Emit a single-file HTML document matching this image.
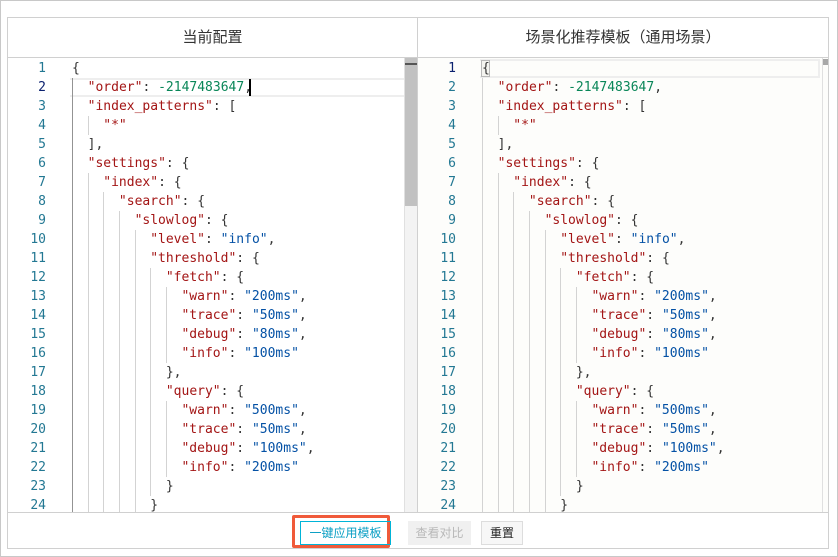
<!DOCTYPE html>
<html><head><meta charset="utf-8"><style>
*{margin:0;padding:0;box-sizing:border-box}
body{width:838px;height:557px;background:#fff;position:relative;overflow:hidden;font-family:"Liberation Sans","Noto Sans CJK SC",sans-serif}
.outer{position:absolute;left:0;top:0;width:838px;height:557px;border:1px solid #c8c8c8}
.box{position:absolute;left:7px;top:17px;width:822px;height:532px;border:1px solid #d0d0d0}
.hd{position:absolute;top:0;height:40px;line-height:40px;text-align:center;font-size:15px;color:#333;border-bottom:1px solid #d0d0d0}
.code{position:absolute;top:40px;height:454px;overflow:hidden;font-family:"DejaVu Sans Mono",monospace;font-size:13px}
.ln{position:absolute;top:1px;width:38px;text-align:right;color:#237893;line-height:19px}
.tx{position:absolute;top:1px;line-height:19px;white-space:pre;color:#333}
.tx div{height:19px}
i{display:inline-block;width:2ch;height:19px;vertical-align:top;border-left:1px solid #d3d3d3}
i.a{border-left-color:#939393}
.k{color:#a31515}.n{color:#098658}.s{color:#0451a5}
.ft{position:absolute;left:0;top:494px;width:820px;height:36px;border-top:1px solid #d0d0d0}
.btn{position:absolute;top:8px;height:24px;line-height:22px;font-size:12px;text-align:center;border:1px solid #ddd}
</style></head><body>
<div class="outer"></div>
<div class="box">
 <div class="hd" style="left:0;width:410px;border-right:1px solid #d0d0d0">当前配置</div>
 <div class="hd" style="left:410px;width:410px">场景化推荐模板（通用场景）</div>

 <div class="code" style="left:0;width:410px;border-right:1px solid #d0d0d0;background:#fff">
  <div style="position:absolute;left:62px;top:20px;width:348px;height:19px;border:2px solid #eee;border-left:none"></div>
  <div class="ln" id="l1"></div>
  <div class="tx" id="t1" style="left:64px"></div>
  <div style="position:absolute;left:241px;top:21px;width:2px;height:17px;background:#000"></div>
  <div style="position:absolute;left:396px;top:0;width:14px;height:454px;background:#f3f3f3;border-left:1px solid #e0e0e0"></div>
  <div style="position:absolute;left:397px;top:0;width:13px;height:148px;background:#c1c1c1"></div>
  <div style="position:absolute;left:397px;top:5px;width:13px;height:2px;background:#555"></div>
 </div>

 <div class="code" style="left:410px;width:410px;background:#fdfdfb">
  <div style="position:absolute;left:62px;top:1px;width:340px;height:19px;border:2px solid #eee;border-left:none"></div>
  <div style="position:absolute;left:63px;top:2px;width:9px;height:17px;border:1px solid #b9b9b9;background:#f4f4f0"></div>
  <div class="ln" id="l2"></div>
  <div class="tx" id="t2" style="left:64px"></div>
  <div style="position:absolute;left:404px;top:0;width:1px;height:454px;background:#e0e0e0"></div>
  <div style="position:absolute;left:405px;top:1px;width:6px;height:6px;background:#a8a8a8"></div>
 </div>

 <div class="ft">
  <div style="position:absolute;left:284px;top:2px;width:98px;height:33px;border:3px solid #f05a3a;border-radius:2px"></div>
  <div class="btn" style="left:292px;width:91px;border-color:#00b4d8;color:#0a9fc4">一键应用模板</div>
  <div class="btn" style="left:400px;width:63px;background:#f0f0f0;border-color:#f0f0f0;color:#b8b8b8">查看对比</div>
  <div class="btn" style="left:473px;width:42px;background:#f7f7f7;color:#222">重置</div>
 </div>
</div>
<script>
var L=[
[0,'{'],
[2,'<span class="k">"order"</span>: <span class="n">-2147483647</span>,'],
[2,'<span class="k">"index_patterns"</span>: ['],
[4,'<span class="k">"*"</span>'],
[2,'],'],
[2,'<span class="k">"settings"</span>: {'],
[4,'<span class="k">"index"</span>: {'],
[6,'<span class="k">"search"</span>: {'],
[8,'<span class="k">"slowlog"</span>: {'],
[10,'<span class="k">"level"</span>: <span class="s">"info"</span>,'],
[10,'<span class="k">"threshold"</span>: {'],
[12,'<span class="k">"fetch"</span>: {'],
[14,'<span class="k">"warn"</span>: <span class="s">"200ms"</span>,'],
[14,'<span class="k">"trace"</span>: <span class="s">"50ms"</span>,'],
[14,'<span class="k">"debug"</span>: <span class="s">"80ms"</span>,'],
[14,'<span class="k">"info"</span>: <span class="s">"100ms"</span>'],
[12,'},'],
[12,'<span class="k">"query"</span>: {'],
[14,'<span class="k">"warn"</span>: <span class="s">"500ms"</span>,'],
[14,'<span class="k">"trace"</span>: <span class="s">"50ms"</span>,'],
[14,'<span class="k">"debug"</span>: <span class="s">"100ms"</span>,'],
[14,'<span class="k">"info"</span>: <span class="s">"200ms"</span>'],
[12,'}'],
[10,'}']];
function build(ln,tx,right){
 var a='',b='';
 L.forEach(function(r,i){
  var n=i+1;
  a+='<div'+(n==2&&!right?' style="color:#0b216f"':(n==1&&right?' style="color:#0b216f"':''))+'>'+n+'</div>';
  var g='';for(var k=0;k<r[0]/2;k++)g+='<i'+(k==0&&!right?' class="a"':'')+'></i>';
  b+='<div>'+g+r[1]+'</div>';
 });
 document.getElementById(ln).innerHTML=a;document.getElementById(tx).innerHTML=b;
}
build('l1','t1',false);build('l2','t2',true);
</script>
</body></html>
